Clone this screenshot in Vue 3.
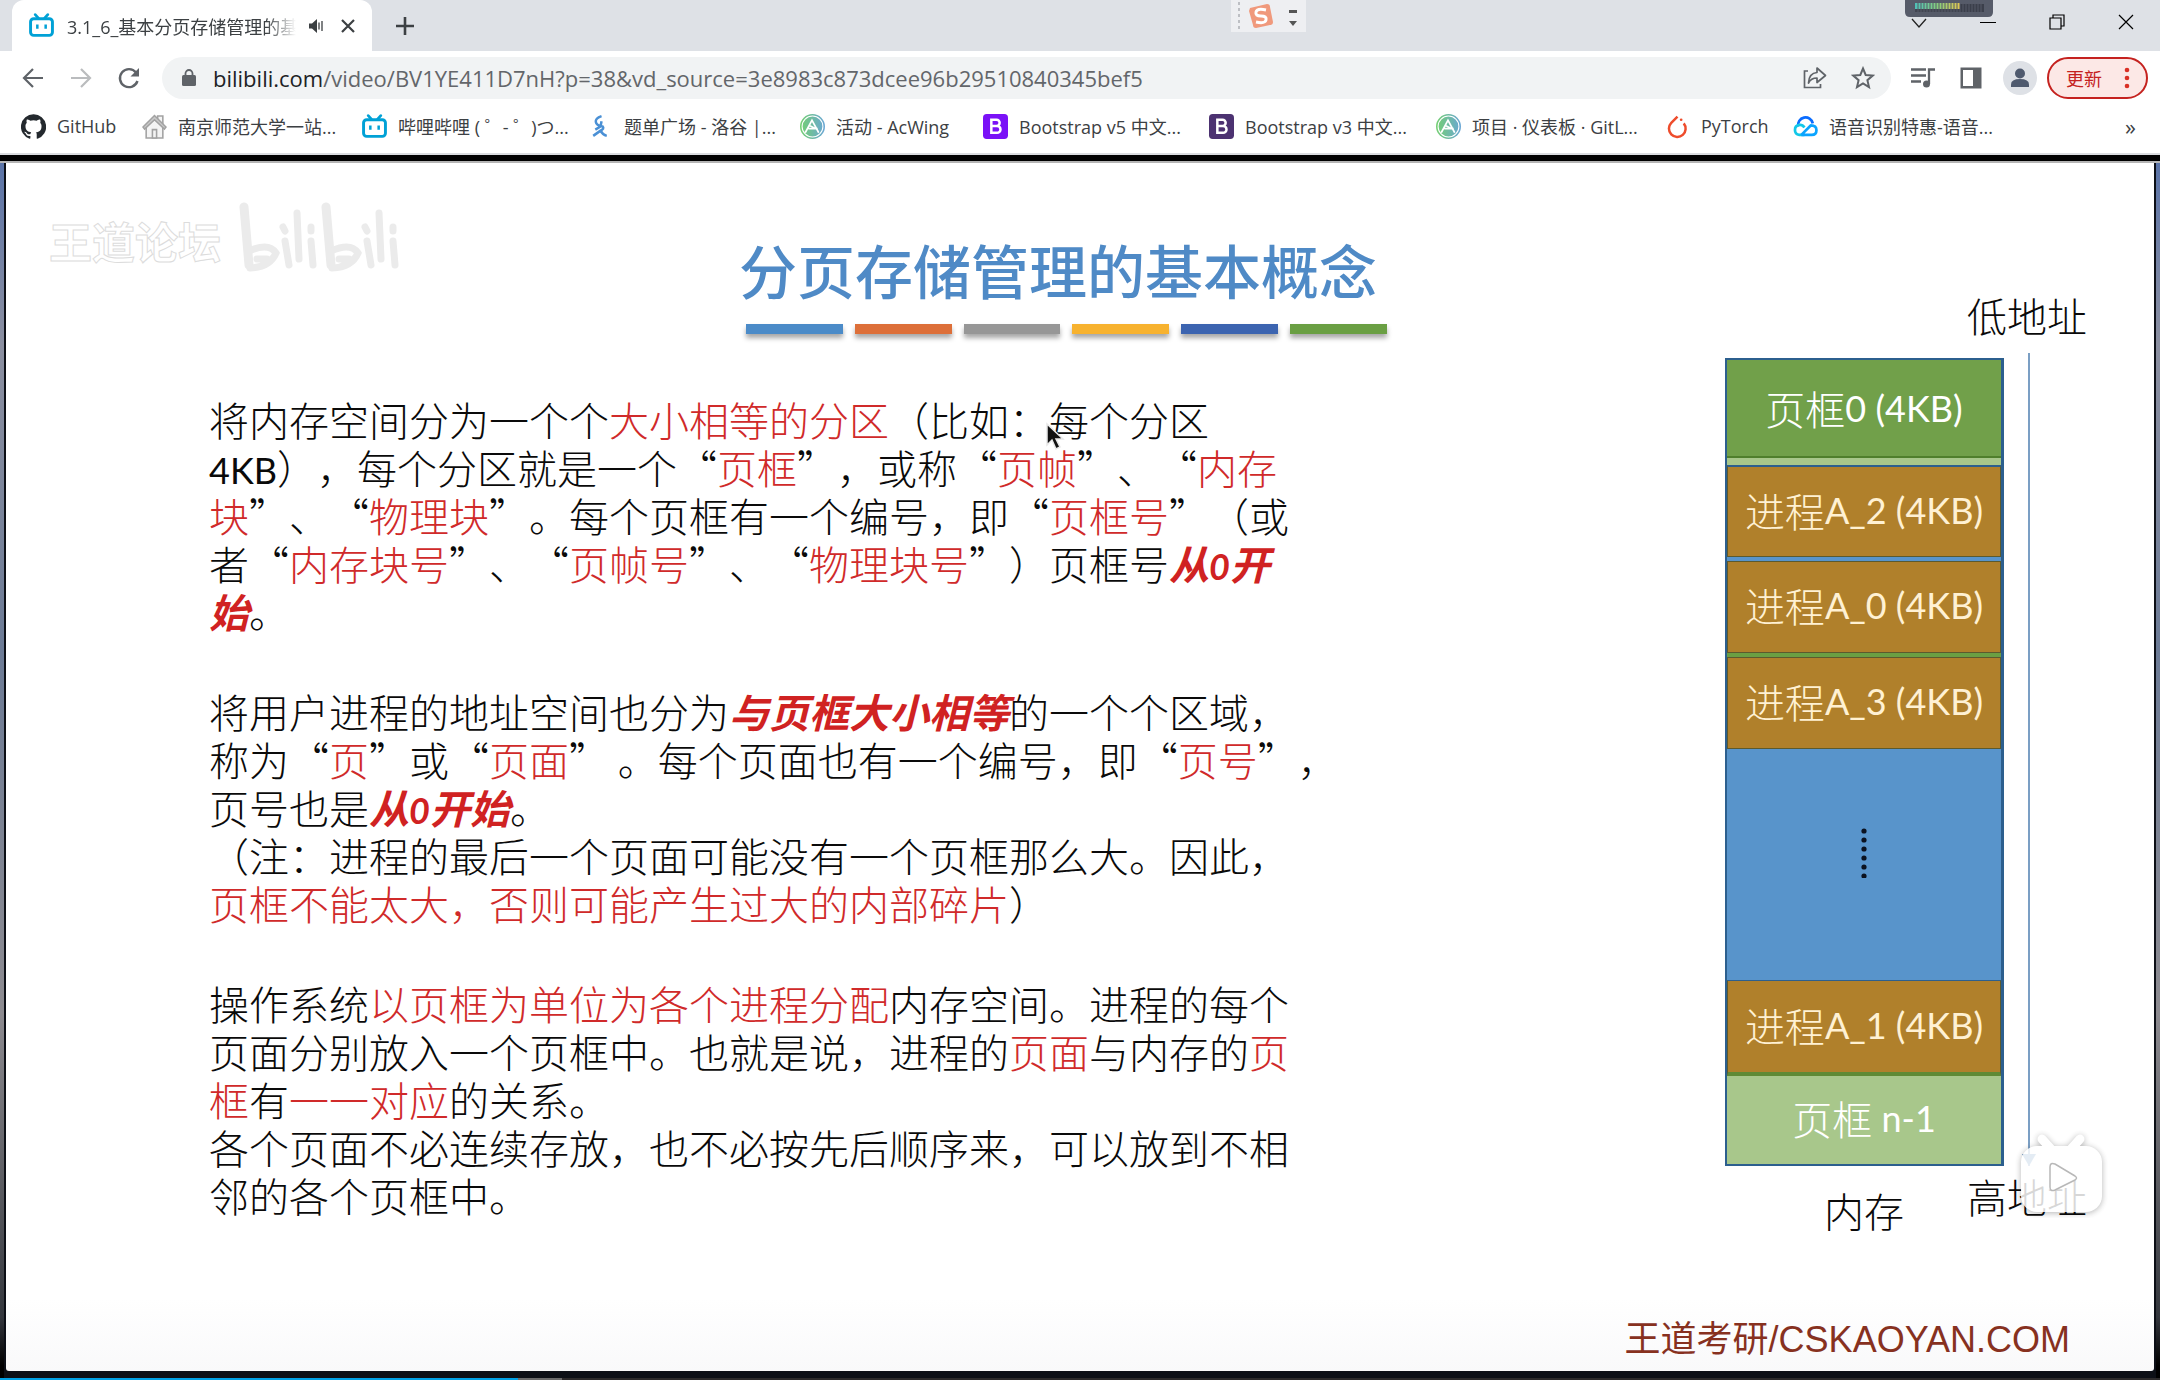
<script setup>
const bookmarks = [
  { icon: 'github', title: 'GitHub', width: 121 },
  { icon: 'house', title: '南京师范大学一站...', width: 220 },
  { icon: 'bili', title: '哔哩哔哩 ( ゜- ゜)つ...', width: 226 },
  { icon: 'luogu', title: '题单广场 - 洛谷 |...', width: 212 },
  { icon: 'acwing', title: '活动 - AcWing', width: 183 },
  { icon: 'b5', title: 'Bootstrap v5 中文...', width: 226 },
  { icon: 'b3', title: 'Bootstrap v3 中文...', width: 227 },
  { icon: 'acwing', title: '项目 · 仪表板 · GitL...', width: 229 },
  { icon: 'torch', title: 'PyTorch', width: 128 },
  { icon: 'cloud', title: '语音识别特惠-语音...', width: 226 },
]

const bars = ['#4b8bc8', '#dd6f39', '#979797', '#f7b22f', '#3c64b0', '#6a9f43']

// Each line is a list of [text, kind]: plain, "r" red, "s" strong red italic, "n" latin digits
const notes = [
  [
    [['将内存空间分为一个个'], ['大小相等的分区', 'r'], ['（比如：每个分区']],
    [['4KB', 'n'], ['），每个分区就是一个“'], ['页框', 'r'], ['”，或称“'], ['页帧', 'r'], ['”、“'], ['内存', 'r']],
    [['块', 'r'], ['”、“'], ['物理块', 'r'], ['”。每个页框有一个编号，即“'], ['页框号', 'r'], ['”（或']],
    [['者“'], ['内存块号', 'r'], ['”、“'], ['页帧号', 'r'], ['”、“'], ['物理块号', 'r'], ['”）页框号'], ['从', 's'], ['0', 's n'], ['开', 's']],
    [['始', 's'], ['。']],
  ],
  [
    [['将用户进程的地址空间也分为'], ['与页框大小相等', 's'], ['的一个个区域，']],
    [['称为“'], ['页', 'r'], ['”或“'], ['页面', 'r'], ['” 。每个页面也有一个编号，即“'], ['页号', 'r'], ['”，']],
    [['页号也是'], ['从', 's'], ['0', 's n'], ['开始', 's'], ['。']],
    [['（注：进程的最后一个页面可能没有一个页框那么大。因此，']],
    [['页框不能太大，否则可能产生过大的内部碎片', 'r'], ['）']],
  ],
  [
    [['操作系统'], ['以页框为单位为各个进程分配', 'r'], ['内存空间。进程的每个']],
    [['页面分别放入一个页框中。也就是说，进程的'], ['页面', 'r'], ['与内存的'], ['页', 'r']],
    [['框', 'r'], ['有'], ['一一对应', 'r'], ['的关系。']],
    [['各个页面不必连续存放，也不必按先后顺序来，可以放到不相']],
    [['邻的各个页框中。']],
  ],
]

const frames = [
  { kind: 'free', cjk: '页框', latin: '0 (4KB)' },
  { kind: 'used lead', cjk: '进程', latin: 'A_2 (4KB)' },
  { kind: 'used', cjk: '进程', latin: 'A_0 (4KB)' },
  { kind: 'used edge', cjk: '进程', latin: 'A_3 (4KB)' },
  { kind: 'rest', cjk: '', latin: '' },
  { kind: 'used tail', cjk: '进程', latin: 'A_1 (4KB)' },
  { kind: 'last', cjk: '页框', latin: ' n-1' },
]
</script>

<template>
  <div class="page" lang="zh-CN">
    <header class="tabs">
      <div class="tab">
        <svg class="ico" viewBox="0 0 24 24" fill="none" stroke="#00a1d6"><path d="M6 1.500l3 3.500M18 1.500l-3 3.500" stroke-width="2.600" stroke-linecap="round"/><rect x="1.500" y="5.500" width="21" height="16" rx="3" stroke-width="2.800"/><path d="M8 11v4M16 11v4" stroke-width="2.400"/></svg>
        <span class="tab-title">3.1_6_基本分页存储管理的基</span>
        <button class="plain" aria-label="静音"><svg width="16" height="16" viewBox="0 0 16 16" fill="#3c4043"><path d="M1 5.500h3L9 1v14L4 10.500H1z"/><path d="M11 4.500v7M14 3v10" stroke="#3c4043" stroke-width="1.300"/></svg></button>
        <button class="plain tab-close" aria-label="关闭标签页"><svg width="14" height="14" viewBox="0 0 14 14" stroke="#3c4043" stroke-width="2.200"><path d="M1 1l12 12M13 1L1 13"/></svg></button>
      </div>
      <button class="plain new-tab" aria-label="新标签页"><svg width="20" height="20" viewBox="0 0 20 20" stroke="#3c4043" stroke-width="2.600"><path d="M10 1v18M1 10h18"/></svg></button>
      <div class="win">
        <button class="plain" aria-label="搜索标签页"><svg width="16" height="16" viewBox="0 0 16 16" fill="none" stroke="#222" stroke-width="1.300"><path d="M1 5l7 8 7-8"/></svg></button>
        <button class="plain" aria-label="最小化"><svg width="16" height="16" viewBox="0 0 16 16" stroke="#000"><path d="M0 8.500h16"/></svg></button>
        <button class="plain" aria-label="还原"><svg width="16" height="16" viewBox="0 0 16 16" fill="none" stroke="#000" stroke-width="1.200"><path d="M1 4h11v11H1zM4 4V1h11v11h-3"/></svg></button>
        <button class="plain" aria-label="关闭"><svg width="16" height="16" viewBox="0 0 16 16" stroke="#000" stroke-width="1.200"><path d="M1 1l14 14M15 1L1 15"/></svg></button>
      </div>
      <div class="ime">
        <svg width="75" height="32" viewBox="0 0 75 32"><path d="M8 2v30" stroke="#bdbfc4" stroke-width="2" stroke-dasharray="3 3"/><path d="M19 8l17-4q3 0 3 3l3 15q0 3-3 3l-14 3q-3 0-3-3L18 11z" fill="#f0997c"/><path d="M35 10q-9-2-10 2t5 4 5 4-10 2" fill="none" stroke="#fff" stroke-width="3"/><path d="M58 10h8v3h-8zM58 21h8l-4 5z" fill="#555"/></svg>
      </div>
      <div class="meter">
        <svg width="88" height="17" viewBox="0 0 88 17"><defs><linearGradient id="lvl"><stop stop-color="#4fc0b8"/><stop offset=".5" stop-color="#86cf7e"/><stop offset="1" stop-color="#e3c750"/></linearGradient></defs><path d="M0 0h88v12q0 5-5 5H5q-5 0-5-5z" fill="#565b69"/><rect x="10" y="3" width="45" height="6" fill="url(#lvl)"/><rect x="55" y="4" width="24" height="8" fill="#3b3f4b"/><rect x="10" y="9" width="45" height="3" fill="#414551"/><path d="M12.500 7.500h66" stroke="#565b69" stroke-width="9" stroke-dasharray="1 2"/></svg>
      </div>
    </header>

    <nav class="toolbar">
      <button class="plain" aria-label="后退"><svg width="24" height="24" viewBox="0 0 24 24" fill="none" stroke="#5f6368" stroke-width="2.200"><path d="M22 12H3M12 3l-9 9 9 9"/></svg></button>
      <button class="plain" aria-label="前进"><svg width="24" height="24" viewBox="0 0 24 24" fill="none" stroke="#babcbe" stroke-width="2.200"><path d="M2 12h19M12 3l9 9-9 9"/></svg></button>
      <button class="plain" aria-label="重新加载"><svg width="24" height="24" viewBox="0 0 24 24" fill="none" stroke="#5f6368" stroke-width="2.400"><path d="M20.500 15A9 9 0 1 1 19 6.500"/><path d="M22 2v8.500h-8.500z" fill="#5f6368" stroke="none"/></svg></button>
      <label class="omni">
        <svg width="14" height="18" viewBox="0 0 14 18"><rect x="0" y="6" width="14" height="11" rx="1.500" fill="#5f6368"/><path d="M3.500 7V4.500a3.500 3.500 0 0 1 7 0V7" fill="none" stroke="#5f6368" stroke-width="1.800"/></svg>
        <span class="host">bilibili.com</span><input class="url" type="text" aria-label="地址" value="/video/BV1YE411D7nH?p=38&vd_source=3e8983c873dcee96b29510840345bef5">
        <button class="plain" aria-label="分享"><svg width="24" height="24" viewBox="0 0 24 24" fill="none" stroke="#5f6368" stroke-width="1.700"><path d="M5 5H1.500v16.500h16V18"/><path d="M14 2l8.500 7.500-8.500 7v-4.500q-6 0-8.500 5Q6 7 14 6.500z" stroke-linejoin="round"/></svg></button>
        <button class="plain" aria-label="收藏"><svg width="24" height="24" viewBox="0 0 24 24" fill="none" stroke="#5f6368" stroke-width="2"><path d="M12 2.500l2.700 6.500 7 .6-5.300 4.600 1.600 6.900-6-3.700-6 3.700 1.600-6.900-5.300-4.600 7-.6z"/></svg></button>
      </label>
      <button class="plain" aria-label="媒体"><svg width="24" height="24" viewBox="0 0 24 24" fill="none" stroke="#5f6368" stroke-width="2.300"><path d="M0 3.500h15M0 9.500h15M0 15.500h10M18 18V3.500h6"/><circle cx="15.500" cy="18" r="3.500" fill="#5f6368" stroke="none"/></svg></button>
      <button class="plain" aria-label="侧边栏"><svg width="24" height="24" viewBox="0 0 24 24"><path d="M1.500 1.500h21v21h-21z" fill="#5f6368"/><path d="M4 4h10v16H4z" fill="#fff"/></svg></button>
      <div class="account">
        <button class="plain" aria-label="用户"><svg width="34" height="34" viewBox="0 0 34 34"><circle cx="17" cy="17" r="17" fill="#dee1e6"/><circle cx="17" cy="12.500" r="5" fill="#4f5a6e"/><path d="M8 26v-2.500q0-5.500 9-5.500t9 5.500V26z" fill="#4f5a6e"/></svg></button>
        <button class="update">更新<svg width="6" height="22" viewBox="0 0 6 22" fill="#d93025"><circle cx="3" cy="3" r="2.300"/><circle cx="3" cy="11" r="2.300"/><circle cx="3" cy="19" r="2.300"/></svg></button>
      </div>
    </nav>

    <nav class="marks">
      <a v-for="(b, i) in bookmarks" :key="i" href="#" class="mark" :style="{ width: b.width + 'px' }">
        <svg class="ico" viewBox="0 0 24 24">
          <path v-if="b.icon === 'github'" fill="#24292e" d="M12 .3a12 12 0 0 0-3.800 23.400c.6.100.8-.3.800-.6v-2c-3.300.700-4-1.600-4-1.600-.6-1.400-1.400-1.800-1.400-1.800-1-.7.100-.7.100-.7 1.200 0 1.900 1.200 1.900 1.200 1 1.800 2.800 1.300 3.500 1 0-.8.400-1.300.700-1.600-2.700-.3-5.500-1.300-5.500-6 0-1.200.5-2.300 1.300-3.100-.2-.4-.6-1.600 0-3.200 0 0 1-.3 3.400 1.200a11.500 11.500 0 0 1 6 0c2.300-1.500 3.300-1.200 3.300-1.200.700 1.600.3 2.800.1 3.200.8.800 1.300 1.900 1.300 3.200 0 4.600-2.800 5.600-5.500 5.900.5.400.9 1.100.9 2.200v3.300c0 .3.100.7.800.6A12 12 0 0 0 12 .3"/>
          <g v-else-if="b.icon === 'house'" fill="#f4f4f4" stroke="#a2a2a2" stroke-width="1.500"><path d="M15 2h5v8h-5z"/><path d="M4 12v11h16V12l-8-7z"/><path d="M1 12.500L12 1.500l11 11-1.500 2L12 5.500l-9.500 9z" fill="#c9c9c9"/><path d="M10 15h4v8h-4z"/></g>
          <g v-else-if="b.icon === 'bili'" fill="none" stroke="#00a1d6"><path d="M6 1.500l3 3.500M18 1.500l-3 3.500" stroke-width="2.600" stroke-linecap="round"/><rect x="1.500" y="5.500" width="21" height="16" rx="3" stroke-width="2.800"/><path d="M8 11v4M16 11v4" stroke-width="2.400"/></g>
          <path v-else-if="b.icon === 'luogu'" fill="none" stroke="#4a90d5" stroke-width="2.400" d="M13 2q-6 2-5.500 5.500T14 12q2 2-2 4l-7 5M13 7l-1 5-5 3M12 16q2 4 6 5"/>
          <g v-else-if="b.icon === 'acwing'" fill="none" stroke="#fff"><circle cx="12" cy="12" r="12" fill="url(#ac)" stroke="none"/><circle cx="12" cy="12" r="10"/><path d="M5 18l6.500-12L18 18M8 14h9M9 11l8 4" stroke-width="1.600"/></g>
          <g v-else-if="b.icon === 'torch'" fill="none" stroke="#ee4c2c" stroke-width="2.400"><path d="M12 2.500L6 8.500a8 8 0 1 0 12 .5"/><circle cx="15.500" cy="5.500" r="1.300" fill="#ee4c2c" stroke="none"/></g>
          <g v-else-if="b.icon === 'cloud'" fill="none" stroke-width="2.600"><path d="M5 12a7 7 0 0 1 14-3" stroke="#0a6cff"/><path d="M11 13q-2-3-5-2.500a4.800 4.800 0 0 0 0 9.500h5" stroke="#12c8e8"/><path d="M8 20l9-9q5.500 0 5.500 4.500T18 20H8" stroke="#0aa4ff" stroke-linejoin="round"/></g>
          <g v-else><rect width="24" height="24" rx="3.500" :fill="b.icon === 'b5' ? '#7a11f7' : '#4c3271'"/><path d="M8 5.500h5a3 3 0 0 1 0 6H8zM8 11.500h5.500a3.300 3.300 0 0 1 0 6.600H8z" fill="none" stroke="#fff" stroke-width="2.400"/></g>
          <defs><linearGradient id="ac"><stop stop-color="#74d070"/><stop offset="1" stop-color="#6aa6d6"/></linearGradient></defs>
        </svg>
        <span>{{ b.title }}</span>
      </a>
      <button class="plain more" aria-label="更多书签">»</button>
    </nav>

    <main class="video">
      <article class="slide">
        <section class="text">
          <div class="heading">
            <h1>分页存储管理的基本概念</h1>
            <div class="bars"><i v-for="c in bars" :key="c" :style="{ background: c }"></i></div>
          </div>
          <div class="notes">
            <p v-for="(para, p) in notes" :key="p">
              <span v-for="(line, l) in para" :key="l" class="line"><span v-for="(part, k) in line" :key="k" :class="part[1]">{{ part[0] }}</span></span>
            </p>
          </div>
        </section>

        <section class="memory">
          <div class="addr low">低地址</div>
          <div class="map">
            <div class="stack">
              <div v-for="(f, i) in frames" :key="i" class="frame" :class="f.kind">
                <template v-if="f.cjk">{{ f.cjk }}<span class="n">{{ f.latin }}</span></template>
                <svg v-else width="6" height="50" viewBox="0 0 6 50" fill="#0b1220"><circle v-for="d in 6" :key="d" cx="3" :cy="d * 9 - 6" r="2.600"/></svg>
              </div>
            </div>
            <div class="axis"></div>
          </div>
          <div class="captions"><span class="mem">内存</span><span class="addr">高地址</span></div>
        </section>
        <footer class="credit">王道考研/CSKAOYAN.COM</footer>
      </article>

      <div class="brand">
        <span>王道论坛</span>
        <svg width="162" height="72" viewBox="0 0 162 72" role="img" aria-label="bilibili" fill="none" stroke="#ebebeb" stroke-width="7" stroke-linecap="round"><path d="M7 6l5 58" stroke-width="9"/><path d="M12 50q20-9 27 2-6 14-26 15M20 58h10M60 12l2 46M46 26l2 4M48 40l4 24M74 26v4M74 40l2 24"/><g transform="translate(82 0)"><path d="M7 6l5 58" stroke-width="9"/><path d="M12 50q20-9 27 2-6 14-26 15M20 58h10M60 12l2 46M46 26l2 4M48 40l4 24M74 26v4M74 40l2 24"/></g></svg>
      </div>

      <svg class="pointer" width="20" height="30" viewBox="0 0 20 30"><path d="M2 2v21l5-5 4 9 4-2-4-8h7z" fill="#111" stroke="#e8e8e8" stroke-width="1.500"/></svg>

      <svg class="tv" width="94" height="88" viewBox="0 0 94 88"><g filter="drop-shadow(0 1px 3px rgba(0,0,0,.35))" opacity=".84"><path d="M27 9l9 10M65 9l-9 10" stroke="#fff" stroke-width="9" stroke-linecap="round"/><rect x="6" y="16" width="81" height="66" rx="16" fill="#fff"/></g><path d="M35 37q0-5 5-3l20 12q3 2 0 4L40 60q-5 2-5-3z" fill="#fff" stroke="#b8b8b8" stroke-width="1.500"/></svg>
    </main>
    <div class="progress"><i class="played"></i><i class="loaded"></i></div>
  </div>
</template>

<style>
body { margin: 0; }
</style>

<style scoped>
* { box-sizing: border-box; }
.page { min-height: 100vh; display: flex; flex-direction: column; background: #000; font-family: "Open Sans", "Noto Sans CJK SC", sans-serif; font-size: 18px; color: #3c4043; }
.plain { border: 0; padding: 0; background: none; display: flex; align-items: center; justify-content: center; flex: none; }
svg { display: block; flex: none; }
.ico { width: 25px; height: 25px; }

.tabs { position: relative; height: 51px; background: #dee1e6; display: flex; align-items: stretch; padding-left: 12px; }
.tab { width: 360px; background: #fff; border-radius: 12px 12px 0 0; display: flex; align-items: center; padding: 0 17px; }
.tab-title { flex: 1; min-width: 0; margin: 0 12px 0 13px; white-space: nowrap; overflow: hidden; -webkit-mask-image: linear-gradient(90deg, #000 87%, transparent); mask-image: linear-gradient(90deg, #000 87%, transparent); }
.tab-close { margin-left: 17px; }
.new-tab { margin-left: 23px; }
.win { margin-left: auto; display: flex; padding-bottom: 8px; }
.win .plain { width: 69px; }
.ime { position: absolute; top: 0; left: 57%; background: #eeeff2; }
.meter { position: absolute; top: 0; right: 167px; }

.toolbar { height: 54px; background: #fff; display: flex; align-items: center; padding: 0 12px 0 21px; gap: 24px; }
.omni { flex: 1; min-width: 0; height: 42px; margin: 0 -4px 0 -3px; border-radius: 21px; background: #f1f3f4; display: flex; align-items: center; padding: 0 16px 0 20px; font-size: 22px; }
.host { color: #202124; margin-left: 17px; }
.url { flex: 1; min-width: 0; border: 0; padding: 0; background: none; outline: none; font: inherit; color: #63666a; }
.omni .plain { margin-left: 24px; }
.account { display: flex; align-items: center; gap: 10px; margin-left: -4px; }
.update { width: 101px; height: 42px; border: 2px solid #c5221f; border-radius: 21px; background: #fce8e6; color: #c5221f; font: 18px "Noto Sans CJK SC", sans-serif; display: flex; align-items: center; justify-content: space-between; padding: 0 16px 0 17px; }

.marks { height: 50px; padding: 0 24px 6px 21px; background: #fff; border-bottom: 2px solid #dadce0; display: flex; align-items: center; }
.mark { display: flex; align-items: center; gap: 11px; color: #3c4043; text-decoration: none; white-space: nowrap; }
.more { margin-left: auto; font: 22px "Open Sans", sans-serif; color: #3c4043; }

.video { flex: 1; position: relative; margin-top: 6px; border-top: 2px solid #b5b5b5; padding: 0 6px 7px; background: linear-gradient(90deg, transparent 4px, #0c0f16 4px, #0c0f16 calc(100% - 4px), transparent calc(100% - 4px)), linear-gradient(#5b74a8, #8b8fa0 15%, #6c7b96 40%, #8d8b90 70%, #34373d 95%, #000 99%); display: flex; }
.slide { flex: 1; background: linear-gradient(#fff 94%, #f9f9fa); border-radius: 0 0 3px 3px; display: grid; grid-template-columns: 1fr 429px; grid-template-rows: auto 1fr; font-family: "Noto Sans CJK SC", sans-serif; font-size: 40px; line-height: 48px; font-weight: 300; color: #0a0a0a; white-space: nowrap; text-spacing-trim: space-all; }
.n { font-family: Lato, sans-serif; font-size: 36px; font-weight: 400; white-space: pre; }

.heading { width: 648px; margin: 66px 0 0 733px; }
h1 { margin: 0; font-size: 58px; line-height: 80px; font-weight: 500; color: #4f8ac6; }
.bars { display: flex; gap: 12px; margin: 15px 0 0 7px; }
.bars i { flex: 1; height: 10px; box-shadow: 0 4px 5px rgba(0, 0, 0, .35); }
.notes { margin: 61px 0 0 203px; display: flex; flex-direction: column; gap: 52px; }
.notes p { margin: 0; }
.line { display: block; height: 48px; }
.r { color: #d02a2a; }
.s { color: #d02222; font-weight: 700; font-style: italic; }

.memory { padding-top: 128px; }
.low { margin-left: 242px; }
.map { margin-top: 14px; display: flex; }
.stack { width: 279px; margin-top: 5px; border: 2px solid #2c5f8e; border-right-width: 3px; background: #5894cb; }
.frame { display: flex; align-items: center; justify-content: center; height: 92px; padding-bottom: 4px; border: 1px solid #5c5a2e; color: #fff; }
.free { height: 98px; padding: 0; background: #71a04a; border: 0; border-bottom: 2px solid #4f7f2c; }
.used { background: #b0802b; color: #fff1d3; margin-bottom: 4px; }
.lead { border-top: 2px solid #2c5f8e; box-shadow: 0 -7px #a8c78b; margin-top: 7px; }
.edge { margin-bottom: 0; box-shadow: 0 -4px #6a9f43; }
.rest { height: 231px; border: 0; padding-bottom: 24px; }
.tail { border-bottom: 4px solid #5f8a35; border-top-color: #2c5f8e; height: 96px; margin-bottom: 0; }
.last { height: 88px; background: #a8c78b; border: 0; }
.axis { position: relative; width: 2px; margin-left: 24px; background: #7b9fc4; }
.axis::after { content: ""; position: absolute; left: -6px; bottom: 0; border: 7px solid transparent; border-top: 12px solid #5b8dc0; border-bottom: 0; }
.captions { display: flex; align-items: flex-start; margin-top: 6px; }
.mem { margin: 14px 63px 0 99px; }
.credit { grid-column: 1 / -1; align-self: end; justify-self: end; margin: 0 84px 7px 0; font-family: "Liberation Sans", "Noto Sans CJK SC", sans-serif; font-size: 36px; font-weight: 400; color: #87311f; }

.brand { position: absolute; top: 34px; left: 49px; display: flex; align-items: center; gap: 16px; font-family: "Noto Sans CJK SC", sans-serif; font-size: 43px; font-weight: 700; color: #fff; -webkit-text-stroke: 1px #dcdcdc; }
.brand span { padding-top: 10px; }
.brand svg { margin-top: 4px; }
.pointer { position: absolute; top: 259px; left: 1045px; }
.tv { position: absolute; right: 51px; top: 967px; }

.progress { height: 2px; background: #2c2a2b; display: flex; }
.played { width: 24%; background: #00a1e6; }
.loaded { width: 2%; background: #6b6b6b; }
</style>
